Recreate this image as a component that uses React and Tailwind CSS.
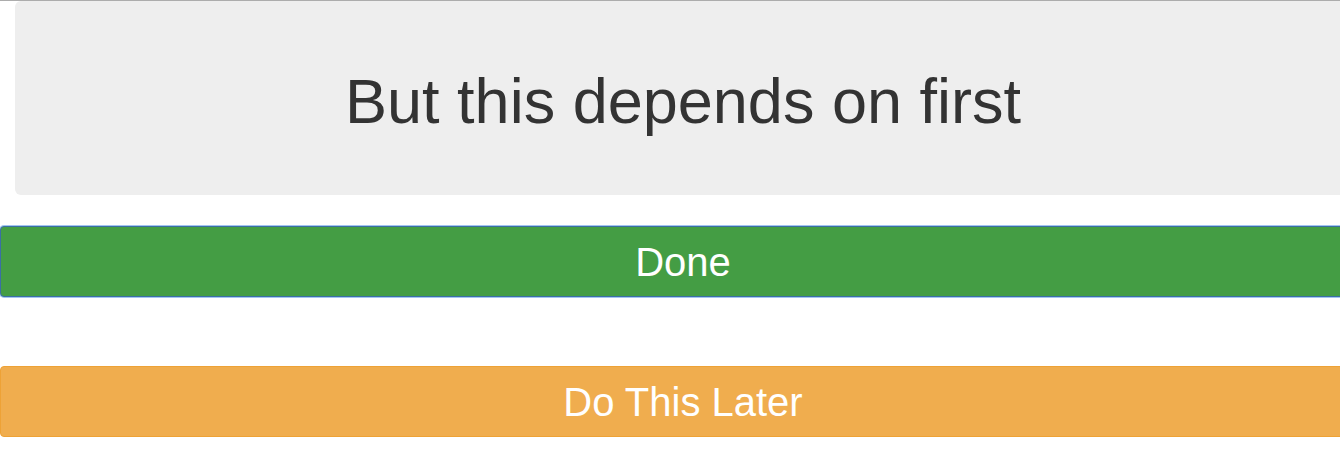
export default function App() {
  return (
    <div className="w-[1366px] min-h-[451px] bg-white border-t border-[#acacac] font-['Liberation_Sans',Arial,sans-serif]">
      <div className="mx-[15px] h-[194px] rounded-md bg-[#eeeeee] flex items-center justify-center">
        <h1 className="text-[63px] leading-none text-[#333333] pt-[6px]">But this depends on first</h1>
      </div>
      <div className="mt-[31px] flex flex-col gap-[69px]">
        <button className="h-[71px] w-full rounded-[4px] border border-[#3b6fa5] bg-[#449d44] text-white text-[40px] leading-none shadow-[0_0_0_1px_rgba(102,160,230,0.6)]">
          Done
        </button>
        <button className="h-[71px] w-full rounded-[4px] border border-[#eea236] bg-[#f0ad4e] text-white text-[40px] leading-none">
          Do This Later
        </button>
      </div>
    </div>
  );
}
